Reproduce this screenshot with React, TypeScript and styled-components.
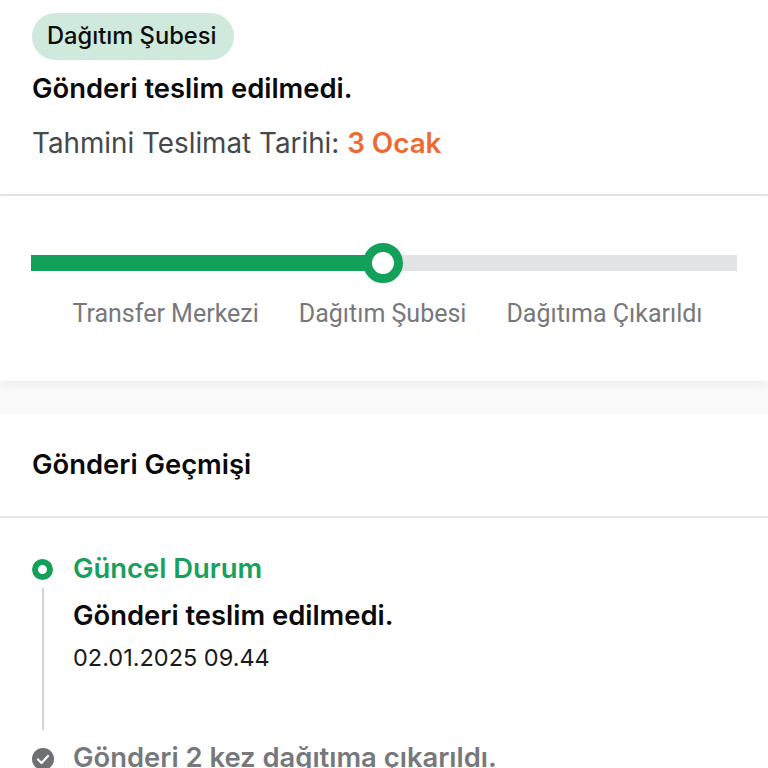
import React from 'react'
import styled, { createGlobalStyle } from 'styled-components'

const GlobalStyle = createGlobalStyle`
  html, body {
    margin: 0;
    padding: 0;
    background: #fff;
    overflow: hidden;
  }
  body {
    font-family: Inter, "Noto Sans", sans-serif;
  }
`

const Page = styled.div`
  width: 768px;
  height: 768px;
  overflow: hidden;
  display: flex;
  flex-direction: column;
  background: #fafafa;
`

const Summary = styled.section`
  flex: none;
  background: #fff;
  height: 194px;
  box-sizing: content-box;
  border-bottom: 2px solid #e6e6e6;
  padding: 0 32px;
  display: flex;
  flex-direction: column;
  align-items: flex-start;
`

const Badge = styled.div`
  margin-top: 13px;
  height: 47px;
  padding: 0 18px 2px 15px;
  box-sizing: border-box;
  border-radius: 24px;
  background: #cfe9dd;
  color: #0b0b0b;
  font-size: 23.7px;
  font-weight: 500;
  display: flex;
  align-items: center;
`

const Title = styled.div`
  margin: 11px 0 0;
  font-size: 27.4px;
  line-height: 34px;
  font-weight: 600;
  color: #0a0a0a;
`

const EtaLine = styled.div`
  margin: 21px 0 0;
  font-size: 27.8px;
  line-height: 34px;
  color: #47484a;
`

const EtaDate = styled.span`
  color: #ee6a35;
  font-weight: 600;
`

const ProgressCard = styled.section`
  flex: none;
  position: relative;
  background: #fff;
  height: 185px;
  padding: 47px 31px 0;
  box-sizing: border-box;
  box-shadow: 0 3px 12px rgba(0, 0, 0, 0.06);
`

const Track = styled.div`
  position: relative;
  height: 16px;
  margin-top: 12px;
  background: #e1e3e5;
`

const TrackFill = styled.div`
  height: 100%;
  background: #13a05a;
`

const TrackKnob = styled.div`
  position: absolute;
  top: 50%;
  transform: translate(-50%, -50%);
  width: 40px;
  height: 40px;
  box-sizing: border-box;
  border-radius: 50%;
  border: 9px solid #13a05a;
  background: #fff;
`

const StepLabels = styled.div`
  display: flex;
  justify-content: center;
  gap: 40px;
  margin-top: 28px;
  padding-left: 7px;
`

const StepLabel = styled.span`
  font-size: 25px;
  line-height: 30px;
  color: #77787b;
  font-family: Roboto, Inter, sans-serif;
`

const HistoryCard = styled.section`
  flex: none;
  margin-top: 33px;
  background: #fff;
`

const HistoryHeader = styled.h2`
  margin: 0;
  height: 100px;
  padding: 0 32px 2px;
  display: flex;
  align-items: center;
  border-bottom: 2px solid #e6e6e6;
  font-size: 27.4px;
  font-weight: 600;
  color: #0a0a0a;
`

const Timeline = styled.div`
  padding: 34px 32px 0;
`

const TimelineItem = styled.div`
  display: grid;
  grid-template-columns: 41px 1fr;
`

const Rail = styled.div`
  display: flex;
  flex-direction: column;
  align-items: center;
  width: 21px;
`

const ActiveDot = styled.div`
  width: 21px;
  height: 21px;
  box-sizing: border-box;
  margin-top: 7px;
  border-radius: 50%;
  border: 6px solid #13a05a;
  background: #fff;
`

const RailLine = styled.div`
  width: 2px;
  height: 142px;
  margin: 8px 0 11px;
  background: #d4d4d4;
`

const DoneIcon = styled.svg`
  width: 22px;
  height: 22px;
  margin-top: 7px;
  display: block;
`

const ItemBody = styled.div`
  display: flex;
  flex-direction: column;
  margin-top: -1px;
`

const ItemStatus = styled.div<{ $tone: 'active' | 'muted' }>`
  font-size: 27.4px;
  line-height: 34px;
  font-weight: 600;
  color: ${({ $tone }) => ($tone === 'active' ? '#17a05e' : '#77787b')};
`

const ItemTitle = styled.div`
  margin-top: 13px;
  font-size: 27.4px;
  line-height: 34px;
  font-weight: 600;
  color: #0a0a0a;
`

const ItemTime = styled.div`
  margin-top: 11px;
  font-size: 23.5px;
  line-height: 30px;
  color: #1a1a1a;
`

const App: React.FC = () => {
  return (
    <Page>
      <GlobalStyle />
      <Summary>
        <Badge>Dağıtım Şubesi</Badge>
        <Title>Gönderi teslim edilmedi.</Title>
        <EtaLine>
          Tahmini Teslimat Tarihi: <EtaDate>3 Ocak</EtaDate>
        </EtaLine>
      </Summary>
      <ProgressCard>
        <Track>
          <TrackFill style={{ width: `${(352 / 706) * 100}%` }} />
          <TrackKnob style={{ left: `${(352 / 706) * 100}%` }} />
        </Track>
        <StepLabels>
          <StepLabel>Transfer Merkezi</StepLabel>
          <StepLabel>Dağıtım Şubesi</StepLabel>
          <StepLabel>Dağıtıma Çıkarıldı</StepLabel>
        </StepLabels>
      </ProgressCard>
      <HistoryCard>
        <HistoryHeader>Gönderi Geçmişi</HistoryHeader>
        <Timeline>
          <TimelineItem>
            <Rail>
              <ActiveDot />
              <RailLine />
            </Rail>
            <ItemBody>
              <ItemStatus $tone="active">Güncel Durum</ItemStatus>
              <ItemTitle>Gönderi teslim edilmedi.</ItemTitle>
              <ItemTime>02.01.2025 09.44</ItemTime>
            </ItemBody>
          </TimelineItem>
          <TimelineItem>
            <Rail>
              <DoneIcon viewBox="0 0 22 22">
                <circle cx="11" cy="11" r="11" fill="#6f7073" />
                <path d="M6 11.5l3.5 3.5L16 8" fill="none" stroke="#fff" strokeWidth="2.2" strokeLinecap="round" strokeLinejoin="round" />
              </DoneIcon>
            </Rail>
            <ItemBody>
              <ItemStatus $tone="muted">Gönderi 2 kez dağıtıma çıkarıldı.</ItemStatus>
            </ItemBody>
          </TimelineItem>
        </Timeline>
      </HistoryCard>
    </Page>
  )
}

export default App
